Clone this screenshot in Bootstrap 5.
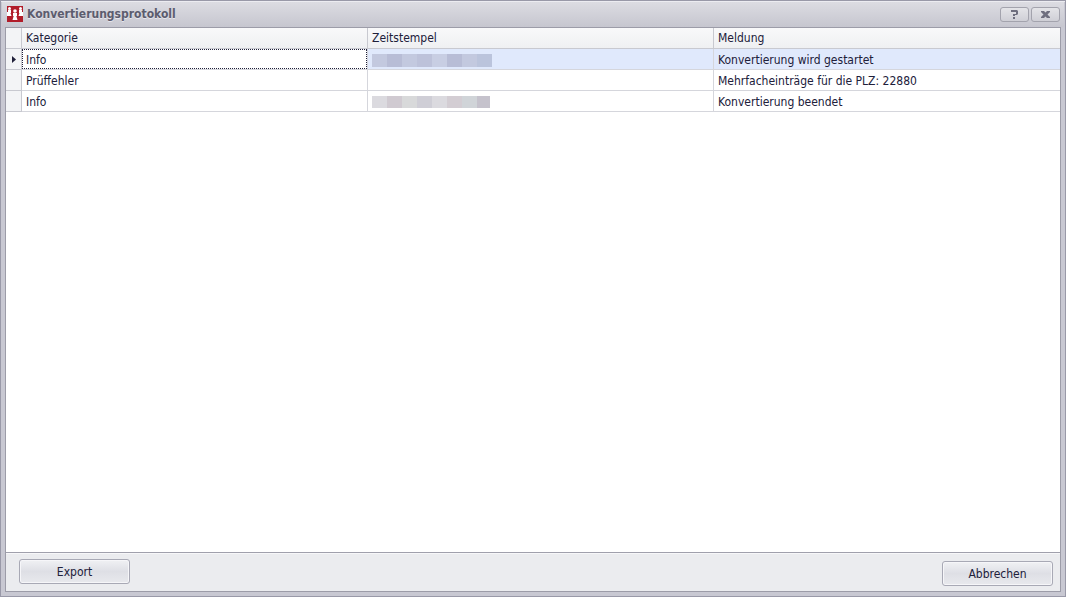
<!DOCTYPE html>
<html lang="de">
<head>
<meta charset="utf-8">
<meta name="viewport" content="width=device-width, initial-scale=1">
<title>Konvertierungsprotokoll</title>
<link href="https://cdn.jsdelivr.net/npm/bootstrap@5.3.0/dist/css/bootstrap.min.css" rel="stylesheet">
<style>
body { font-family: "DejaVu Sans Condensed", Tahoma, sans-serif; font-size: 12px; line-height: 16px; color: #20203a; }
.dialog-frame { background: #c8c8d2; border: 1px solid #9999a8; box-shadow: inset 0 1px #ececf1; padding: 0 4px 4px; }
.title-bar { height: 25px; background: linear-gradient(#dcdce2, #c6c6cf); margin: 1px -3px 0; padding: 0 4px 1px 5px; }
.title-text { font-size: 12px; line-height: 16px; font-weight: 700; color: #5c5c6e; text-shadow: 0 1px #e6e6ec; }
.caption-group { gap: 2px; }
.caption-btn { width: 29px; height: 15px; border: 1px solid #a3a3ad; border-radius: 3px; background: linear-gradient(#e4e4e8, #cfcfd6); }
.inner-frame { border: 1px solid #9c9ca8; background: #ebecef; }
.grid-area { background: #fff; border-bottom: 1px solid #a0a0ac; }
.log-table { table-layout: fixed; border-collapse: separate; border-spacing: 0; }
.log-table th, .log-table td { height: 21px; padding: 0 4px; border-right: 1px solid #d5d6dc; border-bottom: 1px solid #d5d6dc; font-weight: 400; line-height: 16px; vertical-align: middle; white-space: nowrap; }
.log-table td { padding-top: 2px; }
.log-table th { background: linear-gradient(#f9f9fa, #eff0f2); border-color: #c8c9d0; }
.log-table th:last-child, .log-table td:last-child { border-right: 0; }
.log-table .indicator { background: #f3f4f6; padding: 0; border-color: #c8c9d0; }
.indicator-col { width: 16px; }
.chosen td { background: #e0e9fc; }
.chosen .focus-cell { background: #fff; position: relative; }
.focus-cell::after { content: ""; position: absolute; inset: 0; border: 1px dotted #20203a; }
.redacted { width: 120px; height: 13px; }
.redacted.later { width: 118px; height: 12px; }
.action-bar { height: 38px; padding: 5px 7px 5px 13px; border-top: 1px solid #f7f7f9; }
.dialog-btn { width: 111px; height: 25px; border: 1px solid #a8a9b5; border-radius: 3px; background: linear-gradient(#f0f1f4, #dedfe5 50%, #e8e9ed); box-shadow: inset 0 0 0 1px #f6f6f9; color: #20203a; }
</style>
</head>
<body>
<main class="dialog-frame vh-100 d-flex flex-column">
  <header class="title-bar d-flex align-items-center flex-shrink-0">
    <svg class="me-1" width="16" height="16" viewBox="0 0 16 16" aria-hidden="true">
      <path fill="#b11c2a" d="M0 0h16v16H0z"/>
      <g fill="#fff"><circle cx="2.500" cy="2.500" r="1.500"/><path d="M1 4h3v3H3.500L4.500 10H0V6h1z"/><circle cx="13.500" cy="2.500" r="1.500"/><path d="M12 4h3v2h1v4h-4.500L12.500 7H12z"/><circle cx="8" cy="5" r="1.800"/><path d="M6 7h4v3H9.300l1.200 4h-5l1.200-4H6z"/></g>
    </svg>
    <h1 class="title-text mb-0 me-auto">Konvertierungsprotokoll</h1>
    <div class="caption-group d-flex">
      <button type="button" class="caption-btn p-0 d-flex align-items-center justify-content-center" aria-label="Hilfe">
        <svg width="9" height="9" viewBox="0 0 9 9"><path d="M1 0h6l1 1v3L7 5H5v1H3V4h3V2H1zM3 7h2v2H3z" fill="#6f6f7f"/></svg>
      </button>
      <button type="button" class="caption-btn p-0 d-flex align-items-center justify-content-center" aria-label="Schließen">
        <svg width="9" height="7" viewBox="0 0 9 7"><path d="M0 0h3l1.500 1.500L6 0h3v1L6.500 3.500 9 6v1H6L4.500 5.500 3 7H0V6l2.500-2.500L0 1z" fill="#6f6f7f"/></svg>
      </button>
    </div>
  </header>
  <section class="inner-frame flex-grow-1 d-flex flex-column">
    <div class="grid-area flex-grow-1">
      <table class="log-table w-100">
        <colgroup><col class="indicator-col"><col><col><col></colgroup>
        <thead>
          <tr><th class="indicator"></th><th scope="col">Kategorie</th><th scope="col">Zeitstempel</th><th scope="col">Meldung</th></tr>
        </thead>
        <tbody>
          <tr class="chosen">
            <td class="indicator"><svg class="d-block mx-auto" width="4" height="7" viewBox="0 0 4 7"><path d="M0 0l4 3.500L0 7z" fill="#20203a"/></svg></td>
            <td class="focus-cell">Info</td>
            <td><svg class="redacted d-block" viewBox="0 0 120 13" preserveAspectRatio="none" shape-rendering="crispEdges" aria-hidden="true"><path fill="#c3c9df" d="M0 0h120v13H0z"/><path fill="#b8bdd6" d="M15 0h15v13H15zM75 0h15v13H75z"/><path fill="#bdc2da" d="M45 0h15v13H45z"/><path fill="#c8cee3" d="M60 0h15v13H60z"/><path fill="#bbc4dc" d="M105 0h15v13h-15z"/></svg></td>
            <td>Konvertierung wird gestartet</td>
          </tr>
          <tr><td class="indicator"></td><td>Prüffehler</td><td></td><td>Mehrfacheinträge für die PLZ: 22880</td></tr>
          <tr>
            <td class="indicator"></td><td>Info</td>
            <td><svg class="redacted later d-block" viewBox="0 0 118 12" preserveAspectRatio="none" shape-rendering="crispEdges" aria-hidden="true"><path fill="#dbdadf" d="M0 0h118v12H0z"/><path fill="#d0cad1" d="M15 0h15v12H15z"/><path fill="#d8d9da" d="M30 0h15v12H30z"/><path fill="#cfced6" d="M45 0h15v12H45z"/><path fill="#d3cdd3" d="M75 0h15v12H75z"/><path fill="#d0d4d8" d="M90 0h15v12H90z"/><path fill="#c5c2cc" d="M105 0h13v12h-13z"/></svg></td>
            <td>Konvertierung beendet</td>
          </tr>
        </tbody>
      </table>
    </div>
    <footer class="action-bar d-flex justify-content-between flex-shrink-0">
      <button type="button" class="dialog-btn p-0 align-self-start">Export</button>
      <button type="button" class="dialog-btn p-0 align-self-end">Abbrechen</button>
    </footer>
  </section>
</main>
<script src="https://cdn.jsdelivr.net/npm/bootstrap@5.3.0/dist/js/bootstrap.bundle.min.js"></script>
</body>
</html>
